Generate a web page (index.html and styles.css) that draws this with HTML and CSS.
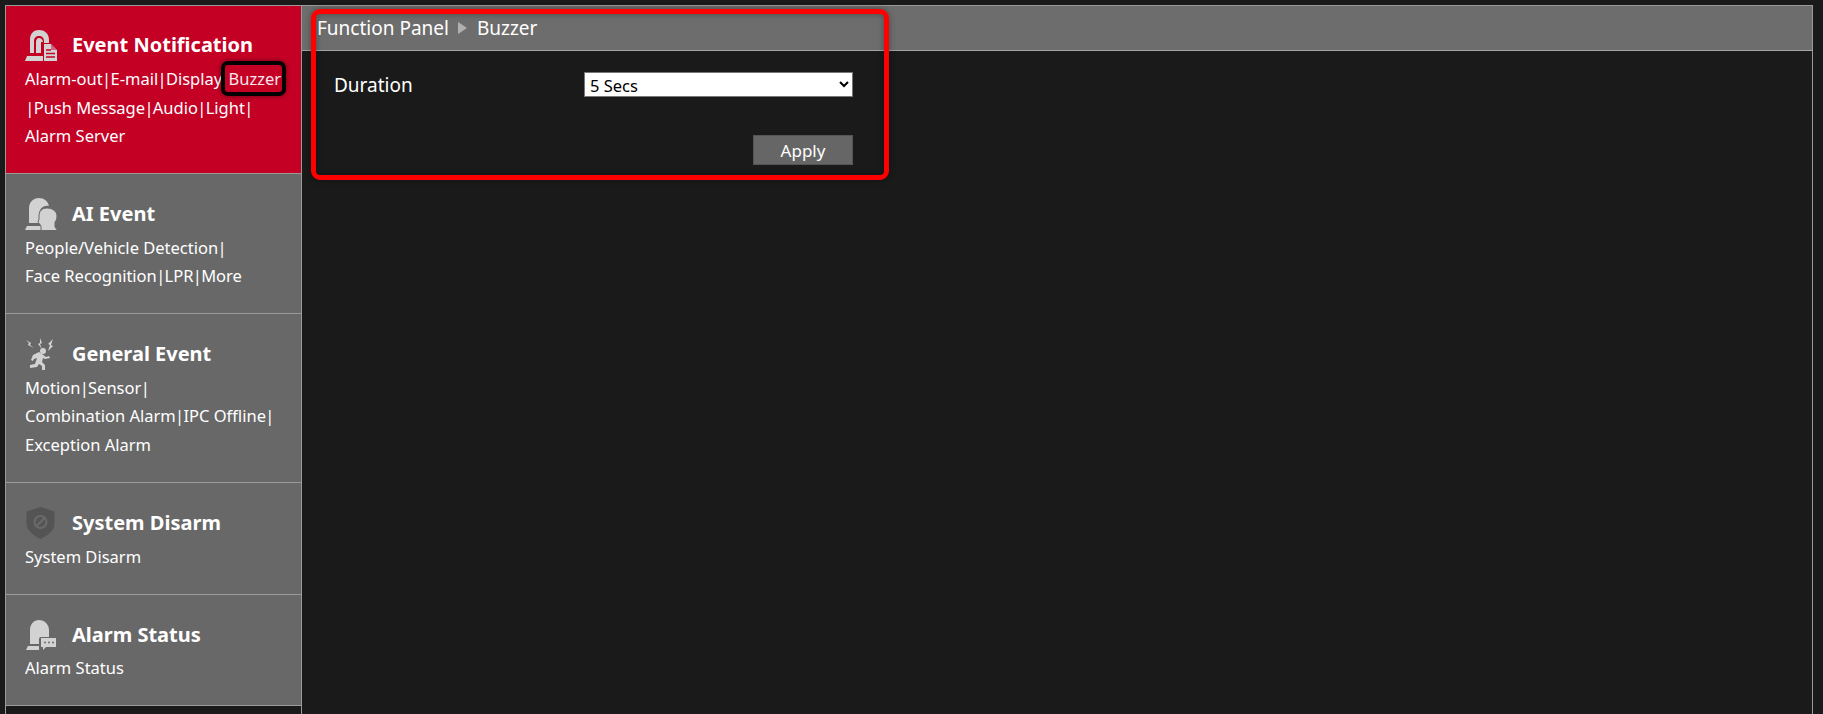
FILE: index.html
```html
<!DOCTYPE html>
<html lang="en">
<head>
<meta charset="utf-8">
<title>Buzzer</title>
<link rel="stylesheet" href="styles.css">
</head>
<body>
<div class="app">
  <nav class="sidebar">
    <section class="item active tall">
      <h2 class="item-title">
        <svg class="icon" viewBox="0 0 32 32"><path fill="#d2d2d2" d="M5 24V11C5 4 9 1 14 1s10 3 10 10v3h-5v-2c0-3-2-5-5-5s-5 2-5 5v12z"/><path fill="#d2d2d2" d="M11 13c0-2 1-4 3-4s4 2 4 4h-2v11h-5z"/><path fill="#d2d2d2" d="M2 27h16v5H0z"/><path fill="#d2d2d2" d="M19 15h7l6 6v11H19z"/><path stroke="#c40025" stroke-width="1.4" d="M21 21h5M21 24.500h9M21 28h9" fill="none"/><path fill="#c40025" d="M26 15l6 6h-6z" opacity=".5"/></svg>
        <span>Event Notification</span>
      </h2>
      <div class="links">
        <div>Alarm-out<i class="sep">|</i>E-mail<i class="sep">|</i>Display <span class="current">Buzzer</span></div>
        <div class="nudge"><i class="sep">|</i>Push Message<i class="sep">|</i>Audio<i class="sep">|</i>Light<i class="sep">|</i></div>
        <div>Alarm Server</div>
      </div>
    </section>
    <section class="item">
      <h2 class="item-title">
        <svg class="icon" viewBox="0 0 32 32"><path fill="#d2d2d2" d="M4 27V11C4 4 8 0 14 0c5 0 9 3 10 8-6-1-10 3-10 9 0 3 1 5 2 7v1H4z"/><path fill="#d2d2d2" d="M2 28h14v4H0z"/><path fill="#d2d2d2" stroke="#686868" stroke-width="1" d="M16 33v-5c-1-2-3-3-3-5l1-1v-4c0-5 3-8 8-8 5 0 10 3 10 8 0 3-1 5-2 6v5l3 4z"/></svg>
        <span>AI Event</span>
      </h2>
      <div class="links">
        <div>People/Vehicle Detection<i class="sep">|</i></div>
        <div>Face Recognition<i class="sep">|</i>LPR<i class="sep">|</i>More</div>
      </div>
    </section>
    <section class="item tall">
      <h2 class="item-title">
        <svg class="icon" viewBox="0 0 32 32"><g fill="#d2d2d2"><path d="M1 2l5 3-1 2 4 3-6-3 1-2zM15 0l2 5-2 1 2 5-4-5 2-1zM28 1l-2 6 2 1-5 5 2-6-2-1z"/><circle cx="18" cy="13" r="3"/><path d="M8 17l6-3 3 2 4 3 3-1 1 2-5 1-2-1-1 4 3 3v6h-3v-5l-3-2-2 3-7 1v-3l5-1 2-6-3 1-1 2-2-1z"/></g></svg>
        <span>General Event</span>
      </h2>
      <div class="links">
        <div>Motion<i class="sep">|</i>Sensor<i class="sep">|</i></div>
        <div>Combination Alarm<i class="sep">|</i>IPC Offline<i class="sep">|</i></div>
        <div>Exception Alarm</div>
      </div>
    </section>
    <section class="item">
      <h2 class="item-title">
        <svg class="icon" viewBox="0 0 32 32"><path fill="#545454" d="M15.500 0l14 4.500v12c0 7-7 12-14 15.500C9 28.500 1.500 24 1.500 16.500v-12z"/><circle cx="15.500" cy="15" r="6" fill="none" stroke="#6a6a6a" stroke-width="2"/><path stroke="#6a6a6a" stroke-width="2" d="M11 19.500l9-9"/></svg>
        <span>System Disarm</span>
      </h2>
      <div class="links"><div>System Disarm</div></div>
    </section>
    <section class="item">
      <h2 class="item-title">
        <svg class="icon" viewBox="0 0 32 32"><path fill="#d2d2d2" d="M5 25V11C5 5 9 1 14 1s10 4 10 10v7h-8a2 2 0 0 0-2 2v5z"/><path fill="#d2d2d2" d="M3 27h11v4H1z"/><path fill="#d2d2d2" d="M16 19h15v9H21l-3 3v-3h-2z"/><g fill="#6a6a6a"><circle cx="20" cy="23.500" r="1"/><circle cx="24" cy="23.500" r="1"/><circle cx="28" cy="23.500" r="1"/></g></svg>
        <span>Alarm Status</span>
      </h2>
      <div class="links"><div>Alarm Status</div></div>
    </section>
  </nav>
  <main class="panel">
    <header class="crumbs">
      <span>Function Panel</span>
      <i class="crumb-arrow"></i>
      <span>Buzzer</span>
    </header>
    <form class="form">
      <div class="row">
        <label class="row-label" for="duration">Duration</label>
        <select class="select" id="duration">
          <option>5 Secs</option>
          <option>10 Secs</option>
          <option>20 Secs</option>
        </select>
      </div>
      <div class="actions"><button class="apply" type="button">Apply</button></div>
    </form>
  </main>
</div>
<div class="mark-red"></div>
</body>
</html>
```

FILE: styles.css
```css
* { box-sizing: border-box; }
html, body { height: 100%; }
body {
  margin: 0;
  background: #1a1a1a;
  color: #fff;
  font-family: "Noto Sans", "Open Sans", sans-serif;
  font-size: 16px;
  overflow: hidden;
}
.app {
  display: flex;
  height: 709px;
  margin: 5px 10px 0 5px;
  border-top: 1px solid #9a9a9a;
}
.sidebar {
  width: 297px;
  flex: none;
  border-left: 1px solid #9a9a9a;
  border-right: 1px solid #9a9a9a;
}
.item {
  height: 140px;
  padding: 23px 0 0 19px;
  background: #686868;
  border-bottom: 1px solid #9a9a9a;
}
.item.tall { height: 169px; }
.item.active { background: #c40025; height: 168px; padding-top: 22px; }
.item:nth-child(4), .item:nth-child(5) { height: 111.500px; }
.item-title {
  display: flex;
  align-items: center;
  margin: 0;
  height: 34px;
  font-size: 20px;
  font-weight: 700;
  line-height: 34px;
}
.icon { width: 32px; height: 32px; margin-right: 15px; flex: none; }
.links { margin-top: 2.500px; font-size: 16.500px; line-height: 28.500px; white-space: nowrap; }
.item.active .links { margin-top: 3px; }
.sep { margin: 0 -.7px; font-style: normal; }
.nudge { padding-left: 1px; }
.current { position: relative; margin-left: 2px; color: #f6e6ea; }
.current::after {
  content: "";
  position: absolute;
  left: -7px;
  right: -5px;
  top: -6px;
  bottom: -6px;
  border: 4.500px solid #000;
  border-radius: 7px;
  box-shadow: 0 0 5px rgba(0, 0, 0, .45);
}
.panel { flex: 1; border-right: 1px solid #9a9a9a; }
.crumbs {
  display: flex;
  align-items: center;
  height: 45px;
  padding-left: 15px;
  background: #6d6d6d;
  border-bottom: 1px solid #a5a5a5;
  font-size: 19px;
}
.crumb-arrow {
  width: 0;
  height: 0;
  margin: 0 10px 0 9px;
  border-left: 9px solid #b0b0b0;
  border-top: 6px solid transparent;
  border-bottom: 6px solid transparent;
}
.form { width: 551px; padding: 21px 0 0 32px; }
.row { display: flex; align-items: center; height: 25px; }
.row-label { width: 250px; font-size: 19px; }
.select {
  width: 269px;
  height: 25px;
  padding: 0 0 0 1px;
  border: 1px solid #767676;
  border-radius: 0;
  background: #fff;
  color: #000;
  font-family: inherit;
  font-size: 16.500px;
}
.actions { display: flex; justify-content: flex-end; margin-top: 38px; }
.apply {
  width: 100px;
  height: 30px;
  padding: 0;
  border: 1px solid #555;
  background: #666;
  color: #fff;
  font-family: inherit;
  font-size: 17px;
}
.mark-red {
  position: absolute;
  left: 311px;
  top: 9px;
  width: 578px;
  height: 171px;
  border: 5px solid #f00;
  border-radius: 9px;
  box-shadow: 0 0 6px rgba(0, 0, 0, .35), inset 0 0 6px rgba(0, 0, 0, .35);
}
```
